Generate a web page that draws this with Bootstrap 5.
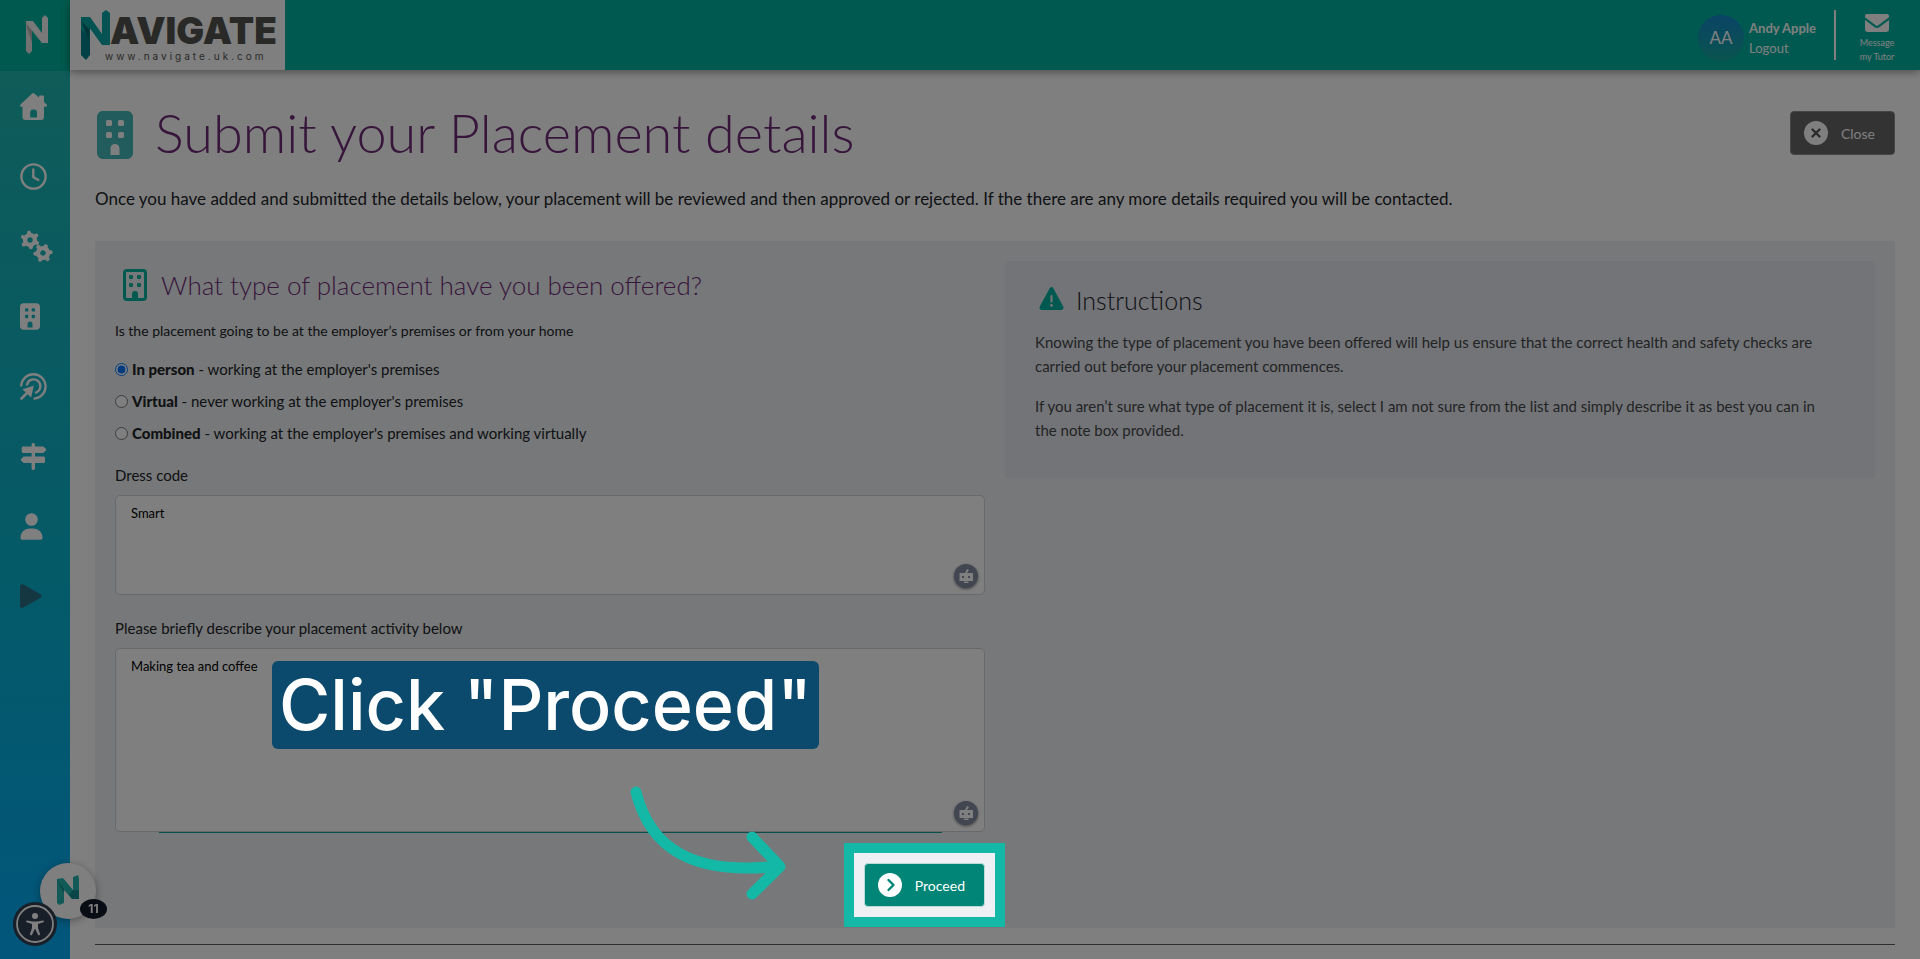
<!DOCTYPE html>
<html lang="en">
<head>
<meta charset="utf-8">
<meta name="viewport" content="width=device-width, initial-scale=1">
<title>Submit your Placement details</title>
<link href="https://cdn.jsdelivr.net/npm/bootstrap@5.3.0/dist/css/bootstrap.min.css" rel="stylesheet">
<style>
  :root { --teal: #00b3a1; --purple: #702d78; }
  body { font-family: Lato, "Open Sans", sans-serif; font-size: 15px; line-height: 24px; color: #212529; background: #fff; overflow-x: hidden; }
  svg { display: block; flex: none; }

  .side { width: 70px; flex: none; background: linear-gradient(#1eb8b2 70px, #0ab4d0 60%, #04acf8); }
  .side-logo { height: 71px; padding: 15px 0 0 25px; background: #00b39c; }
  .side-link { height: 70px; padding-left: 20px; color: #fff; }
  .side-link.is-dark { color: #2a6e84; }

  .topbar { height: 70px; background: var(--teal); box-shadow: 0 2px 8px rgba(0,0,0,.4); color: #fff; }
  .brand-box { width: 215px; height: 70px; background: #fff; padding: 10px 0 0 11px; text-decoration: none; }
  .brand-name { font: 900 37px/38px Inter, sans-serif; color: #53544f; margin-top: 2px; }
  .brand-url { font: 400 10px/12px Inter, sans-serif; letter-spacing: 3px; color: #53544f; margin-left: -5px; }
  .avatar { width: 46px; height: 46px; margin-top: 5px; font-size: 17px; background: linear-gradient(#1488cc, #14a89c); }
  .who { margin: 5px 18px 0 5px; font-size: 13px; line-height: 20px; }
  .who a, .tutor { color: #fff; text-decoration: none; }
  .rule { width: 2px; height: 50px; background: #fff; }
  .tutor { width: 60px; margin: 8px 13px 0 11px; font-size: 9px; line-height: 14px; }

  main { padding: 31px 25px 14px; }
  .page-title { font-size: 54px; line-height: 64px; font-weight: 300; color: var(--purple); margin-left: 22px; }
  .page-icon { margin: 3px 0 0 2px; }
  .intro { font-size: 17px; line-height: 27px; margin: 20px 0 29px; }
  .btn-nav { height: 44px; padding: 0 19px 0 13px; gap: 13px; font-size: 14px; color: #fff; border-radius: 4px; }
  .btn-close-page, .btn-close-page:hover { background: #666; border: 1px solid #8c8c8c; color: #fff; }
  .btn-go, .btn-go:hover { background: #008577; border: 1px solid #b9dcd8; color: #fff; }

  .panel { display: grid; grid-template-columns: 1fr 1fr; background: #eef0f3; padding: 20px 20px 21px; gap: 20px; }
  .section-title { font-size: 26px; line-height: 48px; font-weight: 300; color: var(--purple); margin-left: 14px; }
  .lead-in { font-size: 14px; margin-top: 10px; }
  .choices { margin: 14px 0 18px; gap: 8px; }
  .choices input { width: 13px; height: 13px; margin: 0 4px 0 0; }
  .choices b { font-weight: 900; }
  .lbl { margin-bottom: 8px; }
  .lbl-next { margin-top: 21px; }
  .field { position: relative; }
  .field textarea { display: block; padding: 5px 15px; font-size: 13px; line-height: 24px; color: #000; border: 1px solid #ced4da; border-radius: 5px; resize: none; }
  .short { height: 100px; }
  .tall { height: 184px; }
  .bot { position: absolute; right: 7px; bottom: 7px; width: 24px; height: 24px; border: 0; padding: 0; background: #828da0; box-shadow: 0 1px 3px rgba(0,0,0,.5); }
  .underline-bar { width: 90%; height: 1px; background: #149c9c; }
  .actions { margin-top: 30px; }

  .help-box { background: #e6e8f0; padding: 18px 44px 36px 30px; color: #454849; align-self: start; }
  .help-title { font-size: 25px; line-height: 43px; font-weight: 300; color: #212529; }
  .help-box p { margin: 0 0 16px; }

  /* Guided tour: the frame round the button dims the rest of the page */
  .spot { position: relative; z-index: 60; }
  .spot::before { content: ""; position: absolute; z-index: -1; inset: -20px; background: #eef0f4; border: 10px solid #14b8a6; box-shadow: 0 0 0 3000px rgba(0,0,0,.5); }
  .tip { position: absolute; z-index: 70; left: 157px; top: 13px; height: 88px; padding: 0 7px; background: #0b4a6d; color: #fff; border-radius: 6px; font: 500 70px/88px Inter, sans-serif; white-space: nowrap; }
  .tip-arrow { position: absolute; z-index: 70; left: 505px; top: 132px; pointer-events: none; }

  .chat { position: fixed; z-index: 20; left: 40px; bottom: 40px; width: 56px; height: 56px; border: 0; padding: 0; background: #fff; box-shadow: 0 2px 8px rgba(0,0,0,.35); }
  .chat-count { position: absolute; left: 40px; top: 36px; width: 27px; height: 20px; border-radius: 50%; background: #101828; color: #fff; font: 700 12px/20px Inter, sans-serif; }
  .access { position: fixed; z-index: 21; left: 13px; bottom: 13px; width: 44px; height: 44px; border: 0; padding: 0; background: #323e50; }
</style>
</head>
<body>
<svg width="0" height="0" class="position-absolute" aria-hidden="true">
  <symbol id="building" viewBox="0 0 384 512"><path fill-rule="evenodd" d="M64 0C29 0 0 29 0 64v384c0 35 29 64 64 64h256c35 0 64-29 64-64V64c0-35-29-64-64-64H64zm48 96h32a16 16 0 0 1 16 16v32a16 16 0 0 1-16 16h-32a16 16 0 0 1-16-16v-32a16 16 0 0 1 16-16zm128 0h32a16 16 0 0 1 16 16v32a16 16 0 0 1-16 16h-32a16 16 0 0 1-16-16v-32a16 16 0 0 1 16-16zM112 224h32a16 16 0 0 1 16 16v32a16 16 0 0 1-16 16h-32a16 16 0 0 1-16-16v-32a16 16 0 0 1 16-16zm128 0h32a16 16 0 0 1 16 16v32a16 16 0 0 1-16 16h-32a16 16 0 0 1-16-16v-32a16 16 0 0 1 16-16zM192 352c26 0 48 22 48 48v68h-96v-68c0-26 22-48 48-48z"/></symbol>
  <symbol id="robot" viewBox="0 0 24 24"><path fill="#fff" fill-rule="evenodd" d="M13 5l2 1-2 3h6v8H5.500V9H11zM8 12v2h2v-2zm6 0v2h2v-2zM10 17.500h4.500v1.500H10z"/></symbol>
</svg>

<div class="d-flex min-vh-100">
  <nav class="side d-flex flex-column" aria-label="Main">
    <a class="side-logo" href="#" aria-label="Navigate">
      <svg width="24" height="40" viewBox="0 0 24 40"><path fill="#e4e4e4" d="M1 6h6v30l-3 3-3-3z"/><path fill="#b4b4b4" d="M1 9l6 6v13z"/><path fill="#f2f2f2" d="M1 6h7l9 12V3l3-3 3 3v25h-6L5 13z"/></svg>
    </a>
    <a class="side-link d-flex align-items-center" href="#" aria-label="Home"><svg width="27" height="27" viewBox="0 0 27 27" fill="currentColor"><path fill-rule="evenodd" d="M12.200.6a1.500 1.500 0 0 1 2.100 0L19 4.500V3.500a1 1 0 0 1 1-1h3a1 1 0 0 1 1 1v5.400l2.600 2.500c.9.900.5 2.400-.8 2.400H24v10.200a3 3 0 0 1-3 3H5.500a3 3 0 0 1-3-3V13.800H1.300C0 13.800-.4 12.300.5 11.400zM13.200 16.500a3 3 0 0 0-3 3v5H17v-5a3 3 0 0 0-3-3z"/></svg></a>
    <a class="side-link d-flex align-items-center" href="#" aria-label="Time"><svg width="27" height="27" viewBox="0 0 27 27" fill="none" stroke="currentColor" stroke-width="2.400"><circle cx="13.500" cy="13.500" r="12.100"/><path d="M13.300 6.500v7.500l5 3" stroke-linecap="round"/></svg></a>
    <a class="side-link d-flex align-items-center" href="#" aria-label="Settings"><svg width="33" height="33" viewBox="0 0 33 33" fill="none" stroke="currentColor"><g transform="translate(10 10)"><circle r="4.900" stroke-width="4.400"/><path stroke-width="4" stroke-linecap="round" d="M6 2.500l1 .4M-6-2.500l-1-.4M.800 6.500l.2.800M-.8-6.500l-.2-.8M-5.500 4l-.8.500M5.500-4l.8-.5"/></g><g transform="translate(23 23) rotate(30)"><circle r="4.900" stroke-width="4.400"/><path stroke-width="4" stroke-linecap="round" d="M6 2.500l1 .4M-6-2.500l-1-.4M.800 6.500l.2.800M-.8-6.500l-.2-.8M-5.500 4l-.8.500M5.500-4l.8-.5"/></g></svg></a>
    <a class="side-link d-flex align-items-center" href="#" aria-label="Placements"><svg width="20" height="27" fill="currentColor"><use href="#building"/></svg></a>
    <a class="side-link d-flex align-items-center" href="#" aria-label="Goals"><svg width="27" height="27" viewBox="0 0 27 27" fill="none" stroke="currentColor" stroke-width="2.300" stroke-linecap="round"><path d="M1.200 12.500A12.200 12.200 0 1 1 14.500 25.600"/><path d="M7 11.500a6.800 6.800 0 1 1 9 8"/><path d="M1.500 25.500L8 19" stroke-width="2.600"/><path fill="currentColor" stroke="none" d="M13.800 12.700L2.500 16.200l8.600 8.300z"/></svg></a>
    <a class="side-link d-flex align-items-center" href="#" aria-label="Directions"><svg width="27" height="27" viewBox="0 0 27 27" fill="currentColor"><path d="M13.300 0c1 0 1.700.7 1.700 1.500V3.500h7.500c.6 0 1 .1 1.400.5l2 2c.5.500.5 1 0 1.500l-2 2c-.4.400-.8.500-1.400.5H15v3.500h8.500c.8 0 1.500.7 1.500 1.500v3.500c0 .8-.7 1.500-1.500 1.500H15v5.500c0 .8-.7 1.500-1.700 1.500s-1.700-.7-1.700-1.500V20H4.500c-.6 0-1-.1-1.400-.5l-2-2c-.5-.5-.5-1 0-1.500l2-2c.4-.4.800-.5 1.400-.5h7.100V10H3.200c-.8 0-1.500-.7-1.500-1.500V5c0-.8.700-1.500 1.500-1.500h8.400v-2c0-.8.700-1.500 1.700-1.500z"/></svg></a>
    <a class="side-link d-flex align-items-center" href="#" aria-label="Profile"><svg width="23" height="27" viewBox="0 0 23 27" fill="currentColor"><circle cx="11.500" cy="6.500" r="6.300"/><path d="M9.500 15.500h4a8.800 8.800 0 0 1 9 9.300c0 1.200-.8 1.900-1.800 1.900H2.300c-1 0-1.800-.7-1.800-1.900a8.800 8.800 0 0 1 9-9.300z"/></svg></a>
    <a class="side-link is-dark d-flex align-items-center" href="#" aria-label="Play"><svg width="22" height="24" viewBox="0 0 22 24" fill="currentColor"><path d="M0 2.500C0 .6 2-.4 3.500.5l17 9.800c1.400.8 1.400 2.600 0 3.400l-17 9.800C2 24.400 0 23.400 0 21.500z"/></svg></a>
  </nav>

  <div class="flex-grow-1">
    <header class="topbar d-flex align-items-center">
      <a class="brand-box d-flex" href="#">
        <svg width="29" height="50" viewBox="0 0 29 50"><path fill="#00838a" d="M0 7h9v38l-4 5-5-5z"/><path fill="#0aa5a5" d="M0 7h9l12 17V3l4-3 4 3v32h-8L8 17v10L0 19z"/><path fill="#006d75" d="M0 11l8 8v12z"/></svg>
        <span class="d-flex flex-column"><span class="brand-name">AVIGATE</span><span class="brand-url">www.navigate.uk.com</span></span>
      </a>
      <div class="ms-auto d-flex align-items-center">
        <span class="avatar rounded-circle d-flex align-items-center justify-content-center">AA</span>
        <div class="who"><strong class="d-block">Andy Apple</strong><a href="#">Logout</a></div>
        <span class="rule"></span>
        <a class="tutor text-center" href="#"><svg class="mx-auto mb-1" width="24" height="18" viewBox="0 0 24 18" fill="#fff"><path d="M2.200 0h19.600A2.200 2.200 0 0 1 23 4.100l-9.600 7.200a2.400 2.400 0 0 1-2.800 0L1 4.100A2.200 2.200 0 0 1 2.200 0z"/><path d="M0 6l9.700 7.200a4 4 0 0 0 4.600 0L24 6v9a3 3 0 0 1-3 3H3a3 3 0 0 1-3-3z"/></svg>Message<br>my Tutor</a>
      </div>
    </header>

    <main>
      <div class="d-flex align-items-center justify-content-between">
        <div class="d-flex align-items-center">
          <svg class="page-icon" width="36" height="48" fill="#46b8ba"><use href="#building"/></svg>
          <h1 class="page-title mb-0">Submit your Placement details</h1>
        </div>
        <button type="button" class="btn btn-nav btn-close-page d-flex align-items-center"><svg width="24" height="24" viewBox="0 0 24 24"><circle cx="12" cy="12" r="12" fill="#fff"/><path d="M8.500 8.500l7 7m0-7l-7 7" stroke="#555" stroke-width="2.400" stroke-linecap="round"/></svg>Close</button>
      </div>
      <p class="intro">Once you have added and submitted the details below, your placement will be reviewed and then approved or rejected. If the there are any more details required you will be contacted.</p>

      <div class="panel">
        <form onsubmit="return false">
          <div class="d-flex align-items-center">
            <svg class="ms-2" width="24" height="32" viewBox="0 0 24 32" fill="#00b3a1"><path fill-rule="evenodd" d="M4 0h16a4 4 0 0 1 4 4v24a4 4 0 0 1-4 4H4a4 4 0 0 1-4-4V4a4 4 0 0 1 4-4zm0 3a1 1 0 0 0-1 1v24a1 1 0 0 0 1 1h5v-4a3 3 0 0 1 6 0v4h5a1 1 0 0 0 1-1V4a1 1 0 0 0-1-1z"/><rect x="6" y="6" width="4" height="4" rx="1"/><rect x="14" y="6" width="4" height="4" rx="1"/><rect x="6" y="14" width="4" height="4" rx="1"/><rect x="14" y="14" width="4" height="4" rx="1"/></svg>
            <h2 class="section-title mb-0">What type of placement have you been offered?</h2>
          </div>
          <div class="lead-in">Is the placement going to be at the employer’s premises or from your home</div>
          <div class="choices d-flex flex-column">
            <label class="d-flex align-items-center"><input type="radio" name="kind" checked><span><b>In person</b> - working at the employer's premises</span></label>
            <label class="d-flex align-items-center"><input type="radio" name="kind"><span><b>Virtual</b> - never working at the employer's premises</span></label>
            <label class="d-flex align-items-center"><input type="radio" name="kind"><span><b>Combined</b> - working at the employer's premises and working virtually</span></label>
          </div>
          <label class="lbl d-block" for="dress">Dress code</label>
          <div class="field">
            <textarea id="dress" class="form-control short">Smart</textarea>
            <button type="button" class="bot rounded-circle" aria-label="Writing assistant"><svg width="24" height="24"><use href="#robot"/></svg></button>
          </div>
          <label class="lbl lbl-next d-block" for="activity">Please briefly describe your placement activity below</label>
          <div class="field">
            <textarea id="activity" class="form-control tall">Making tea and coffee</textarea>
            <button type="button" class="bot rounded-circle" aria-label="Writing assistant"><svg width="24" height="24"><use href="#robot"/></svg></button>
            <div class="tip" role="tooltip">Click "Proceed"</div>
            <svg class="tip-arrow" width="176" height="130" viewBox="620 780 176 130" fill="none" stroke="#14b8a6" stroke-width="11" stroke-linecap="round" stroke-linejoin="round"><path d="M636 792C650 848 692 876 779 866M752 837L780 866.500 752 894"/></svg>
          </div>
          <div class="underline-bar mx-auto"></div>
          <div class="actions d-flex justify-content-end">
            <div class="spot"><button type="submit" class="btn btn-nav btn-go d-flex align-items-center"><svg width="24" height="24" viewBox="0 0 24 24"><circle cx="12" cy="12" r="12" fill="#fff"/><path d="M10.500 7l5 5-5 5" fill="none" stroke="#008577" stroke-width="2.400" stroke-linecap="round" stroke-linejoin="round"/></svg>Proceed</button></div>
          </div>
        </form>
        <aside class="help-box">
          <div class="d-flex align-items-center">
            <svg class="mb-1 ms-1" width="25" height="23" viewBox="0 0 25 23"><path fill="#00b3a1" d="M10.800 1a2 2 0 0 1 3.400 0l10 18.600c.9 1.600-.1 3.400-1.900 3.400H2.700C.9 23-.1 21.200.8 19.600z"/><path d="M12.500 9v5.500" stroke="#e6e7ef" stroke-width="2.200" stroke-linecap="round"/><circle cx="12.500" cy="18.500" r="1.400" fill="#e6e7ef"/></svg>
            <h3 class="help-title mb-0 ms-2 ps-1">Instructions</h3>
          </div>
          <p class="mt-2">Knowing the type of placement you have been offered will help us ensure that the correct health and safety checks are carried out before your placement commences.</p>
          <p class="mb-0">If you aren’t sure what type of placement it is, select I am not sure from the list and simply describe it as best you can in the note box provided.</p>
        </aside>
      </div>
      <hr class="mt-3 mb-0 border-dark opacity-75">
    </main>
  </div>
</div>

<button type="button" class="chat rounded-circle" aria-label="Open chat">
  <svg class="mx-auto" width="24" height="32" viewBox="0 0 24 32"><path fill="#24b5b0" d="M1 4l6-1 10 12V2l5-2 1 4v20h-7L8 15v13l-5 2-2-2z"/><path fill="#158c90" d="M1 5l7 9 0 4zM17 15h6v9h-7l-3-4z"/></svg>
  <span class="chat-count">11</span>
</button>
<button type="button" class="access rounded-circle" aria-label="Accessibility options">
  <svg width="44" height="44" viewBox="0 0 44 44"><circle cx="22" cy="22" r="18" fill="none" stroke="#fff" stroke-width="1.800"/><g fill="#fff"><circle cx="22" cy="14" r="3"/><path d="M14 18.500l5.500 1h5l5.500-1c1-.1 1.300 1.500.3 1.800L25 22v4l2 6c.3 1.300-1.500 1.900-2 .8L22.300 27h-.6L19 32.800c-.5 1.100-2.300.5-2-.8l2-6v-4l-5.300-1.700c-1-.3-.7-1.900.3-1.800z"/></g></svg>
</button>
<script src="https://cdn.jsdelivr.net/npm/bootstrap@5.3.0/dist/js/bootstrap.bundle.min.js"></script>
</body>
</html>
